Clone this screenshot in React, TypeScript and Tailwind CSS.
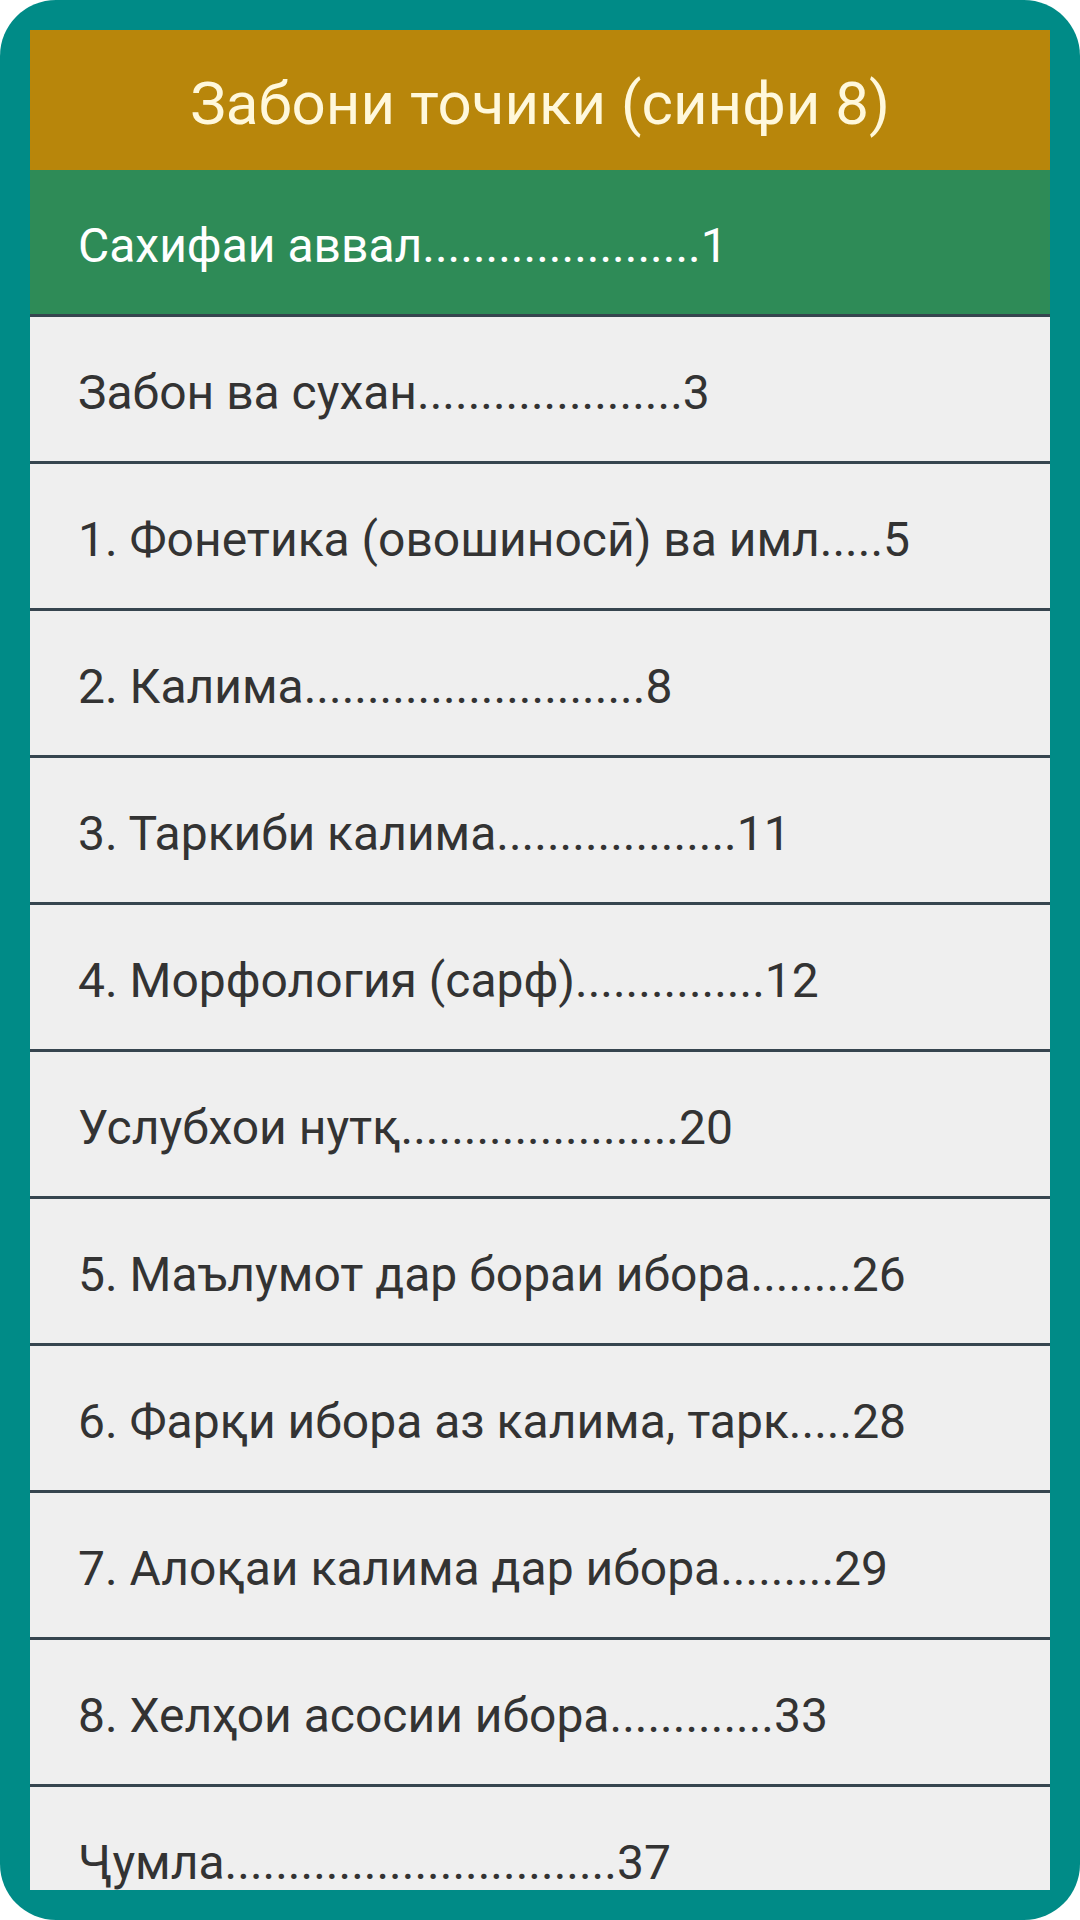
const items = [
  'Сахифаи аввал......................1',
  'Забон ва сухан.....................3',
  '1. Фонетика (овошиносӣ) ва имл.....5',
  '2. Калима...........................8',
  '3. Таркиби калима...................11',
  '4. Морфология (сарф)...............12',
  'Услубхои нутқ......................20',
  '5. Маълумот дар бораи ибора........26',
  '6. Фарқи ибора аз калима, тарк.....28',
  '7. Алоқаи калима дар ибора.........29',
  '8. Хелҳои асосии ибора.............33',
  'Ҷумла...............................37',
]

export default function App() {
  return (
    <div className="h-[1920px] w-[1080px] bg-white">
      <div className="h-full w-full rounded-[56px] bg-[#008b87] p-[30px]">
        <div className="flex h-full w-full flex-col overflow-hidden bg-[#efefef] font-['Roboto',sans-serif]">
          <div className="flex h-[140px] shrink-0 items-center justify-center bg-[#b8860b] pt-[7px] text-[60px] text-[#fff8dc]">
            Забони точики (синфи 8)
          </div>
          {items.map((t, i) => (
            <div
              key={i}
              className={
                i === 0
                  ? 'flex h-[147px] shrink-0 items-center border-b-[3px] border-[#36454f] bg-[#2e8b57] pt-[7px] pl-[48px] text-[48px] text-white'
                  : 'flex h-[147px] shrink-0 items-center border-b-[3px] border-[#36454f] pt-[7px] pl-[48px] text-[48px] text-[#333333]'
              }
            >
              {t}
            </div>
          ))}
        </div>
      </div>
    </div>
  )
}
